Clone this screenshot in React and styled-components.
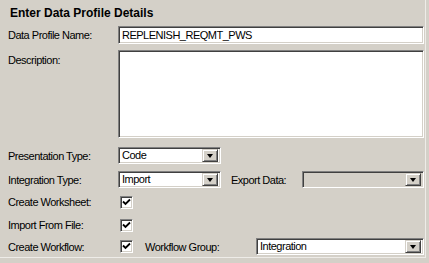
import React from 'react';
import styled, { createGlobalStyle } from 'styled-components';

const GlobalStyle = createGlobalStyle`
  html, body {
    margin: 0;
    padding: 0;
    background: #d4d0c8;
  }
  body {
    font-family: 'Liberation Sans', Arial, sans-serif;
    font-size: 11px;
    color: #000;
  }
`;

const Panel = styled.div`
  width: 426px;
  height: 258px;
  box-sizing: border-box;
  background: #d4d0c8;
  border-right: 1px solid #eeece8;
  border-bottom: 1px solid #eeece8;
  padding-left: 8px;
`;

const Title = styled.div`
  height: 26px;
  line-height: 26px;
  padding-left: 2px;
  font-size: 12px;
  font-weight: bold;
`;

const Form = styled.div`
  display: flex;
  flex-direction: column;
`;

const Row = styled.div`
  display: flex;
  align-items: ${p => (p.$top ? 'flex-start' : 'center')};
  height: ${p => p.$h}px;
  margin-top: ${p => p.$mt || 0}px;
`;

const Label = styled.div`
  width: ${p => p.$w || 110}px;
  flex: none;
  margin-left: ${p => p.$ml || 0}px;
  padding-top: ${p => p.$pt || 0}px;
  letter-spacing: -0.5px;
  white-space: nowrap;
`;

const sunken = `
  box-sizing: border-box;
  border-top: 1px solid #808080;
  border-left: 1px solid #808080;
  border-right: 1px solid #ffffff;
  border-bottom: 1px solid #ffffff;
  box-shadow: inset 1px 1px 0 #404040, inset -1px -1px 0 #d4d0c8;
`;

const TextBox = styled.div`
  ${sunken}
  width: 306px;
  height: ${p => p.$h}px;
  background: #fff;
  padding: 2px 0 0 3px;
  letter-spacing: -0.5px;
  line-height: 13px;
`;

const SelectBox = styled.div`
  ${sunken}
  width: ${p => p.$w}px;
  height: 17px;
  background: ${p => (p.$disabled ? '#d4d0c8' : '#fff')};
  display: flex;
  align-items: center;
  padding: 0 2px 0 3px;
  letter-spacing: -0.5px;
  flex: none;
`;

const SelectValue = styled.div`
  flex: 1;
  line-height: 13px;
`;

const DropButton = styled.div`
  width: 16px;
  height: 13px;
  box-sizing: border-box;
  background: #d4d0c8;
  border-top: 1px solid #d4d0c8;
  border-left: 1px solid #d4d0c8;
  border-right: 1px solid #404040;
  border-bottom: 1px solid #404040;
  box-shadow: inset 1px 1px 0 #ffffff, inset -1px -1px 0 #808080;
  display: flex;
  align-items: center;
  justify-content: center;
`;

const Arrow = styled.div`
  width: 0;
  height: 0;
  border-left: 3.5px solid transparent;
  border-right: 3.5px solid transparent;
  border-top: 4px solid #000;
  margin-top: 1px;
`;

const Check = styled.div`
  ${sunken}
  width: 13px;
  height: 13px;
  background: #fff;
  margin-left: 2px;
  flex: none;
  display: flex;
  align-items: center;
  justify-content: center;
`;

const Select = ({ value, width, disabled }) => (
  <SelectBox $w={width} $disabled={disabled}>
    <SelectValue>{value}</SelectValue>
    <DropButton>
      <Arrow />
    </DropButton>
  </SelectBox>
);

const CheckBox = () => (
  <Check>
    <svg width="9" height="9" viewBox="0 0 9 9">
      <path d="M1 3.5 L3.5 6 L8 1.5" stroke="#000" strokeWidth="1.8" fill="none" />
    </svg>
  </Check>
);

const App = () => (
  <>
    <GlobalStyle />
    <Panel>
      <Title>Enter Data Profile Details</Title>
      <Form>
        <Row $h={18}>
          <Label>Data Profile Name:</Label>
          <TextBox $h={18}>REPLENISH_REQMT_PWS</TextBox>
        </Row>
        <Row $h={88} $mt={6} $top>
          <Label $pt={4}>Description:</Label>
          <TextBox $h={88} />
        </Row>
        <Row $h={17} $mt={9}>
          <Label>Presentation Type:</Label>
          <Select value="Code" width={103} />
        </Row>
        <Row $h={17} $mt={7}>
          <Label>Integration Type:</Label>
          <Select value="Import" width={103} />
          <Label $w={71} $ml={10}>Export Data:</Label>
          <Select value="" width={122} disabled />
        </Row>
        <Row $h={18} $mt={5}>
          <Label>Create Worksheet:</Label>
          <CheckBox />
        </Row>
        <Row $h={18} $mt={5}>
          <Label>Import From File:</Label>
          <CheckBox />
        </Row>
        <Row $h={17} $mt={4}>
          <Label>Create Workflow:</Label>
          <CheckBox />
          <Label $w={111} $ml={12}>Workflow Group:</Label>
          <Select value="Integration" width={168} />
        </Row>
      </Form>
    </Panel>
  </>
);

export default App;
